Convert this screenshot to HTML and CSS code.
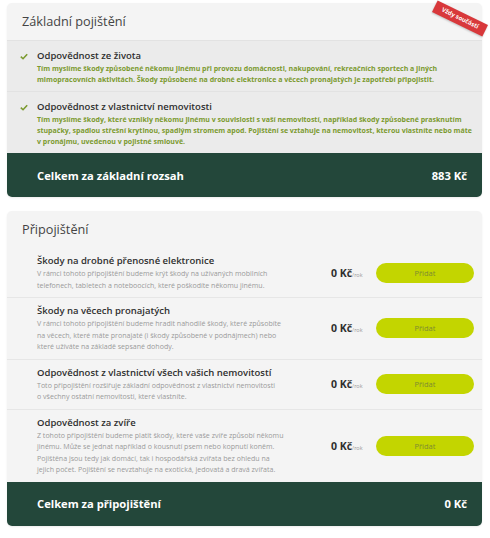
FILE: index.html
```html
<!DOCTYPE html>
<html>
<head>
  <title>Pojištění odpovědnosti</title>
  <link rel="stylesheet" href="styles.css">
</head>
<body>

  <div class="box">
    <div class="box-head">Základní pojištění</div>
    <div class="ribbon">Vždy součástí</div>

    <div class="base-item">
      <svg class="check" viewBox="0 0 10 8"><path d="M1 4.2 L3.8 6.8 L9 1.2" /></svg>
      <div>
        <div class="item-title">Odpovědnost ze života</div>
        <div class="base-desc">Tím myslíme škody způsobené někomu jinému při provozu domácnosti, nakupování, rekreačních sportech a jiných mimopracovních aktivitách. Škody způsobené na drobné elektronice a věcech pronajatých je zapotřebí připojistit.</div>
      </div>
    </div>

    <div class="base-item">
      <svg class="check" viewBox="0 0 10 8"><path d="M1 4.2 L3.8 6.8 L9 1.2" /></svg>
      <div>
        <div class="item-title">Odpovědnost z vlastnictví nemovitosti</div>
        <div class="base-desc">Tím myslíme škody, které vznikly někomu jinému v souvislosti s vaší nemovitostí, například škody způsobené prasknutím stupačky, spadlou střešní krytinou, spadlým stromem apod. Pojištění se vztahuje na nemovitost, kterou vlastníte nebo máte v&nbsp;pronájmu, uvedenou v pojistné smlouvě.</div>
      </div>
    </div>

    <div class="total">
      <span>Celkem za základní rozsah</span>
      <span>883 Kč</span>
    </div>
  </div>

  <div class="box">
    <div class="box-head">Připojištění</div>

    <div class="extra-item">
      <div class="extra-text">
        <div class="item-title">Škody na drobné přenosné elektronice</div>
        <div class="extra-desc">V rámci tohoto připojištění budeme krýt škody na užívaných mobilních telefonech, tabletech a noteboocích, které poškodíte někomu jinému.</div>
      </div>
      <div class="price">0 Kč<small>/rok</small></div>
      <button class="add">Přidat</button>
    </div>

    <div class="extra-item">
      <div class="extra-text">
        <div class="item-title">Škody na věcech pronajatých</div>
        <div class="extra-desc">V rámci tohoto připojištění budeme hradit nahodilé škody, které způsobíte na věcech, které máte pronajaté (i škody způsobené v podnájmech) nebo které užíváte na základě sepsané dohody.</div>
      </div>
      <div class="price">0 Kč<small>/rok</small></div>
      <button class="add">Přidat</button>
    </div>

    <div class="extra-item">
      <div class="extra-text">
        <div class="item-title">Odpovědnost z vlastnictví všech vašich nemovitostí</div>
        <div class="extra-desc">Toto připojištění rozšiřuje základní odpovědnost z vlastnictví nemovitosti o&nbsp;všechny ostatní nemovitosti, které vlastníte.</div>
      </div>
      <div class="price">0 Kč<small>/rok</small></div>
      <button class="add">Přidat</button>
    </div>

    <div class="extra-item">
      <div class="extra-text">
        <div class="item-title">Odpovědnost za zvíře</div>
        <div class="extra-desc">Z tohoto připojištění budeme platit škody, které vaše zvíře způsobí někomu jinému. Může se jednat například o kousnutí psem nebo kopnutí koněm. Pojištěna jsou tedy jak domácí, tak i hospodářská zvířata bez ohledu na jejich počet. Pojištění se nevztahuje na exotická, jedovatá a dravá zvířata.</div>
      </div>
      <div class="price">0 Kč<small>/rok</small></div>
      <button class="add">Přidat</button>
    </div>

    <div class="total">
      <span>Celkem za připojištění</span>
      <span>0 Kč</span>
    </div>
  </div>

</body>
</html>
```

FILE: styles.css
```css
body {
  margin: 0;
  padding: 3px 8px 0 7px;
  background: #fff;
  font-family: 'Open Sans', 'Liberation Sans', sans-serif;
  color: #333;
}

.box {
  position: relative;
  background: #f4f4f4;
  border-radius: 5px;
  margin-bottom: 14px;
  box-shadow: 0 1px 2px rgba(0,0,0,0.08);
}

.box-head {
  font-size: 12.7px;
  padding: 9px 15px 10px;
  line-height: 18px;
  color: #444;
}

.ribbon {
  position: absolute;
  top: 9px;
  right: -6px;
  width: 56px;
  height: 13px;
  line-height: 13px;
  background: #d8383b;
  color: #fff;
  font-size: 6px;
  font-weight: 700;
  text-align: center;
  transform: rotate(26deg);
  box-shadow: 0 1px 2px rgba(0,0,0,0.2);
}

.base-item {
  display: flex;
  background: #ebebeb;
  padding: 8px 10px 6px 13px;
  border-top: 1px solid #e2e2e2;
}

.base-item:first-of-type {
  border-top: none;
}

.check {
  width: 8px;
  height: 7px;
  margin: 4px 9px 0 0;
  flex-shrink: 0;
}

.check path {
  fill: none;
  stroke: #7b9a2f;
  stroke-width: 2;
}

.item-title {
  font-size: 9.5px;
  font-weight: 600;
  line-height: 13px;
  color: #2f2f2f;
}

.base-desc {
  font-size: 7px;
  font-weight: 700;
  line-height: 11px;
  color: #7b9a2f;
  padding-top: 1px;
}

.total {
  display: flex;
  justify-content: space-between;
  align-items: center;
  height: 44px;
  padding: 0 15px 0 30px;
  background: #23473a;
  color: #fff;
  font-size: 11.2px;
  font-weight: 700;
  border-radius: 0 0 5px 5px;
}

.extra-item {
  display: flex;
  align-items: center;
  padding: 6px 8px 6px 30px;
  border-top: 1px solid #e6e6e6;
}

.box-head + .extra-item {
  border-top: none;
}

.extra-text {
  width: 250px;
}

.extra-desc {
  font-size: 7.05px;
  line-height: 11.5px;
  color: #9a9a9a;
  padding-top: 1px;
}

.price {
  margin-left: 44px;
  width: 44px;
  font-size: 10.5px;
  font-weight: 700;
  color: #2f2f2f;
}

.price small {
  font-size: 5.5px;
  font-weight: 400;
  color: #999;
}

.add {
  width: 98px;
  height: 20px;
  margin-left: auto;
  border: none;
  border-radius: 10px;
  background: #c3d500;
  color: #7d8c30;
  font-family: inherit;
  font-size: 7.5px;
  cursor: pointer;
}
```
